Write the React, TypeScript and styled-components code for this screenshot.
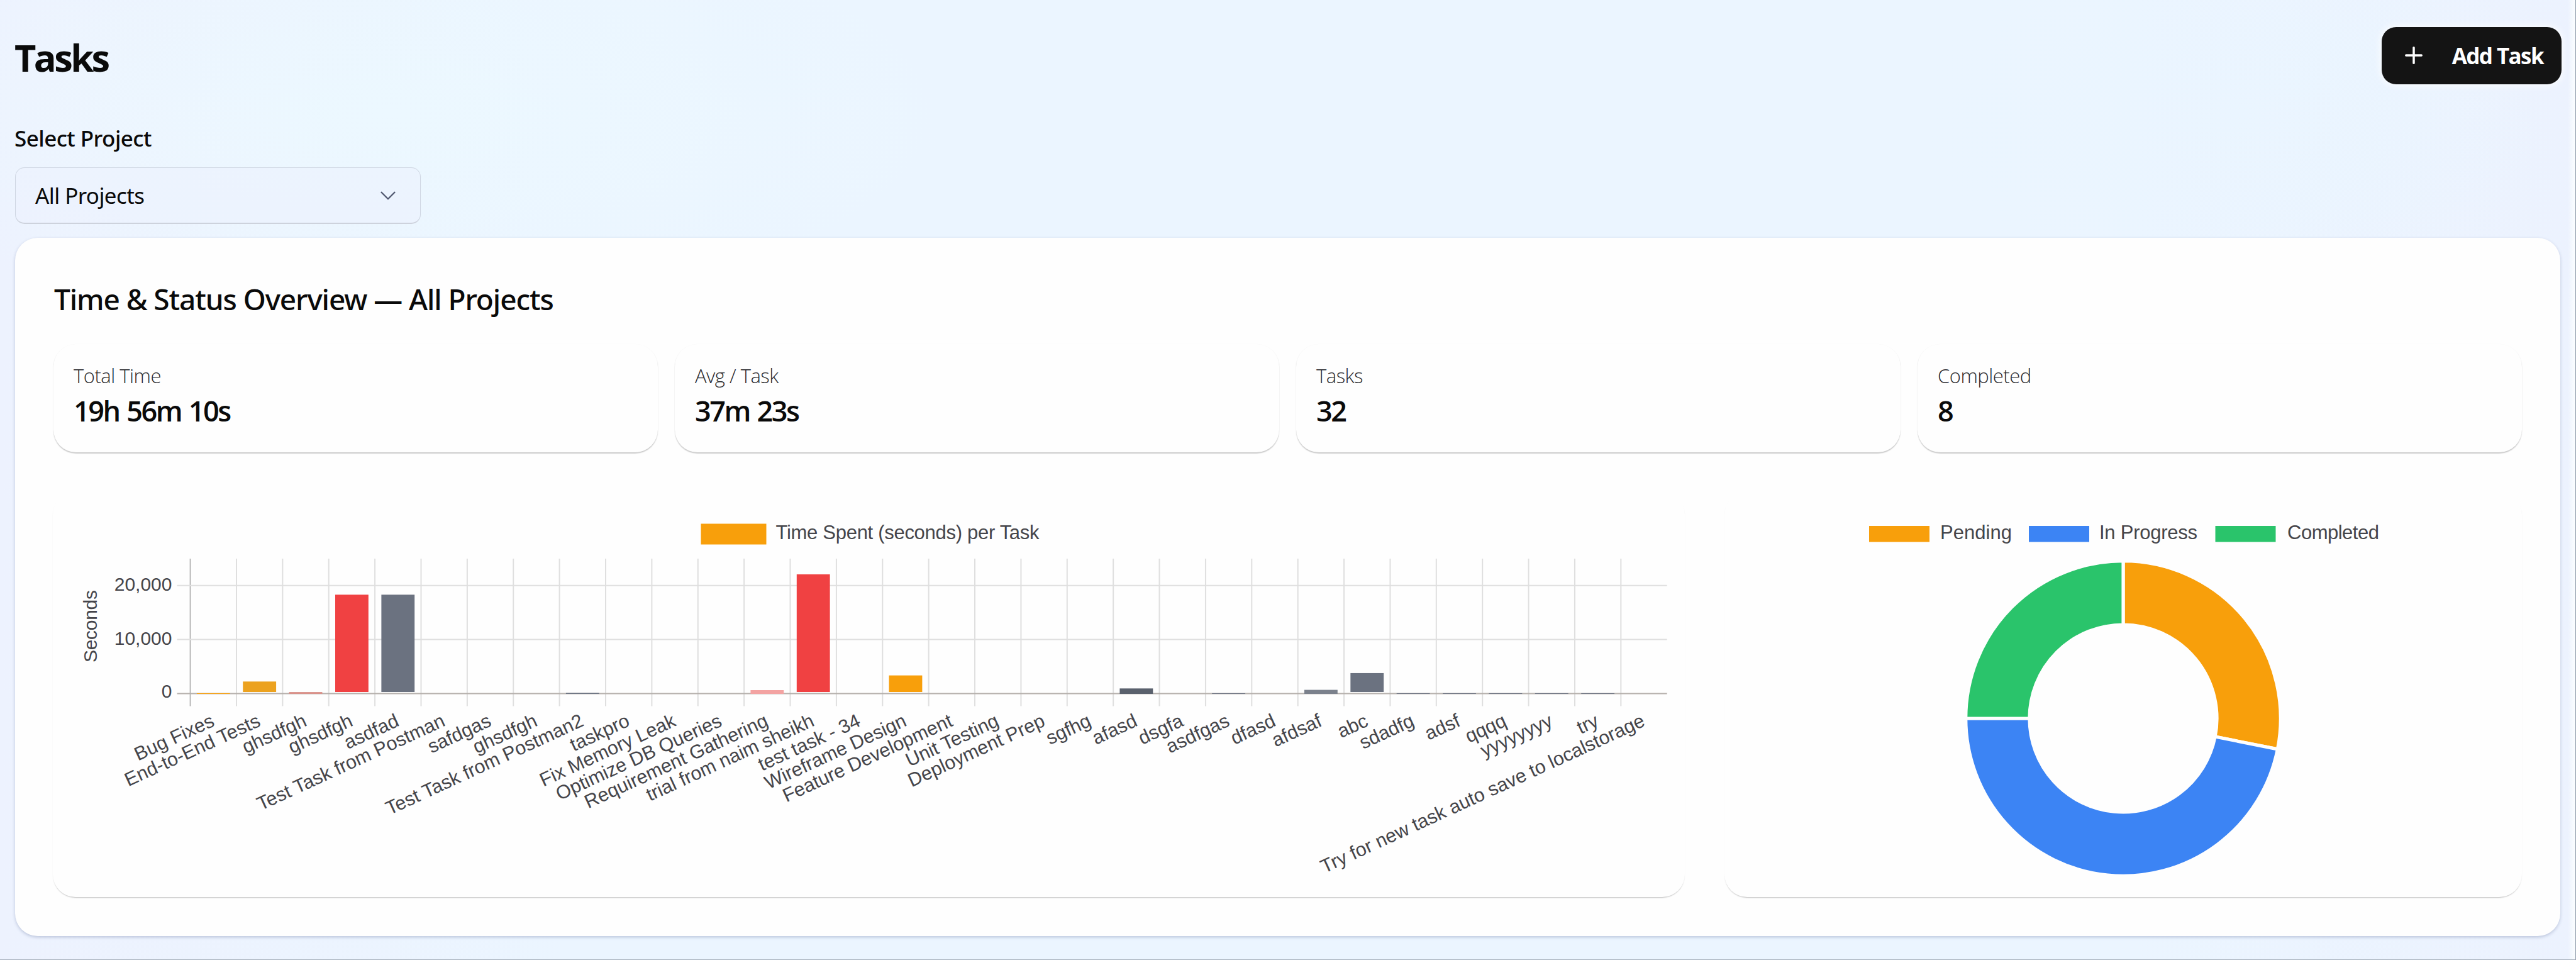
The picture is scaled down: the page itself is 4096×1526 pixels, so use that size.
import React from "react";
import { ChevronDown, Plus } from "lucide-react";
import styled, { createGlobalStyle } from "styled-components";

const GlobalStyle = createGlobalStyle`
  * {
    box-sizing: border-box;
  }

  body {
    margin: 0;
    font-family: "Noto Sans", "Open Sans", sans-serif;
    color: #0a0a0a;
  }
`;

const Page = styled.div`
  width: 4096px;
  height: 1526px;
  padding: 0 24px;
  overflow: hidden;
  border-right: 1px solid #8d99a8;
  border-bottom: 1px solid #a3adb8;
  background:
    linear-gradient(to left, #fbfeff 0, rgba(251, 254, 255, 0) 12px),
    radial-gradient(ellipse 900px 330px at 620px 180px, #ecf8ff 0%, rgba(236, 248, 255, 0) 100%),
    radial-gradient(ellipse 500px 300px at 3560px 180px, #eaf5ff 0%, rgba(234, 245, 255, 0) 100%),
    linear-gradient(to right, #edf2fe 0, #ebf5ff 900px, #ebf5ff 3400px, #ecf2fe 4096px);
`;

const Header = styled.header`
  height: 176px;
  display: flex;
  align-items: center;
  justify-content: space-between;
`;

const Heading = styled.h1`
  margin: 5px 0 0 -1px;
  font-family: "Open Sans", sans-serif;
  font-size: 59.5px;
  line-height: 80px;
  font-weight: 700;
  letter-spacing: -3.6px;
`;

const AddButton = styled.button`
  width: 286px;
  height: 91px;
  margin-right: -2px;
  padding: 0 29px 0 30px;
  display: flex;
  align-items: center;
  justify-content: space-between;
  border: none;
  border-radius: 23px;
  background: #141414;
  color: #fff;
  box-shadow: 0 0 12px 2px rgba(255, 255, 255, 0.85);
  font-family: "Open Sans", sans-serif;
  font-size: 35px;
  font-weight: 700;
  letter-spacing: -1.6px;
`;

const FieldLabel = styled.label`
  display: block;
  margin-top: 24px;
  margin-left: -1px;
  font-size: 35px;
  line-height: 40px;
  font-weight: 500;
  letter-spacing: -0.55px;
`;

const Select = styled.div`
  width: 645px;
  height: 90px;
  margin-top: 26px;
  padding: 0 30px 0 31px;
  display: flex;
  align-items: center;
  justify-content: space-between;
  border: 1px solid #cfd6e2;
  border-bottom: 2px solid #cdd2dc;
  border-radius: 15px;
  background: rgba(237, 242, 254, 0.6);
  font-size: 35px;
  letter-spacing: -0.6px;
`;

const Card = styled.section`
  width: 4047px;
  height: 1110px;
  margin-top: 22px;
  padding: 67px 61px 0;
  border-radius: 36px;
  background: #fefefe;
  box-shadow: 0 2px 5px rgba(60, 80, 130, 0.28);
`;

const CardTitle = styled.h2`
  margin: 0 0 0 1px;
  font-size: 46px;
  line-height: 60px;
  font-weight: 500;
  letter-spacing: -1.1px;
`;

const Stats = styled.div`
  margin-top: 42px;
  display: grid;
  grid-template-columns: repeat(4, 1fr);
  gap: 27px;
`;

const Stat = styled.div`
  height: 172px;
  padding: 30px 32px 0;
  border-radius: 36px;
  background: #fefefe;
  box-shadow: 0 1.5px 1.5px rgba(0, 0, 0, 0.2);
`;

const StatLabel = styled.div`
  font-family: "Open Sans", sans-serif;
  font-size: 31px;
  line-height: 40px;
  font-weight: 300;
  letter-spacing: -0.5px;
  color: #2c2c30;
`;

const StatValue = styled.div`
  margin-top: 6px;
  font-family: "Open Sans", sans-serif;
  font-size: 45px;
  line-height: 60px;
  font-weight: 600;
  letter-spacing: -2.5px;
  word-spacing: 2.5px;
`;

const Charts = styled.div`
  margin-top: 63px;
  margin-left: -1px;
  display: grid;
  grid-template-columns: 2595px 1fr;
  gap: 63px;
`;

const Panel = styled.div`
  height: 644px;
  border-radius: 36px;
  background: #fefefe;
  box-shadow: 0 2px 2px -1px rgba(0, 0, 0, 0.25);
  overflow: hidden;

  svg {
    display: block;
    font-family: "Liberation Sans", Arial, sans-serif;
    font-size: 31px;
    fill: #45454a;
  }
`;

const ORANGE = "#f89f0b";
const RED = "#f04142";
const GRAY = "#6b7280";
const BLUE = "#3c84f4";
const GREEN = "#2ac46b";

interface Task {
  name: string;
  seconds: number;
  color: string;
}

const tasks: Task[] = [
  { name: "Bug Fixes", seconds: 60, color: ORANGE },
  { name: "End-to-End Tests", seconds: 2230, color: "#eca21f" },
  { name: "ghsdfgh", seconds: 280, color: "#d9928a" },
  { name: "ghsdfgh", seconds: 18300, color: RED },
  { name: "asdfad", seconds: 18300, color: GRAY },
  { name: "Test Task from Postman", seconds: 0, color: GRAY },
  { name: "safdgas", seconds: 0, color: GRAY },
  { name: "ghsdfgh", seconds: 0, color: GRAY },
  { name: "Test Task from Postman2", seconds: 120, color: GRAY },
  { name: "taskpro", seconds: 0, color: GRAY },
  { name: "Fix Memory Leak", seconds: 0, color: GRAY },
  { name: "Optimize DB Queries", seconds: 0, color: GRAY },
  { name: "Requirement Gathering", seconds: 640, color: "#f3a3a2" },
  { name: "trial from naim sheikh", seconds: 22060, color: RED },
  { name: "test task - 34", seconds: 0, color: GRAY },
  { name: "Wireframe Design", seconds: 3360, color: ORANGE },
  { name: "Feature Development", seconds: 0, color: GRAY },
  { name: "Unit Testing", seconds: 0, color: GRAY },
  { name: "Deployment Prep", seconds: 0, color: GRAY },
  { name: "sgfhg", seconds: 0, color: GRAY },
  { name: "afasd", seconds: 950, color: "#5a616d" },
  { name: "dsgfa", seconds: 0, color: GRAY },
  { name: "asdfgas", seconds: 60, color: GRAY },
  { name: "dfasd", seconds: 0, color: GRAY },
  { name: "afdsaf", seconds: 690, color: "#7b818c" },
  { name: "abc", seconds: 3790, color: GRAY },
  { name: "sdadfg", seconds: 60, color: GRAY },
  { name: "adsf", seconds: 60, color: GRAY },
  { name: "qqqq", seconds: 60, color: GRAY },
  { name: "yyyyyyyy", seconds: 60, color: GRAY },
  { name: "try", seconds: 60, color: GRAY },
  { name: "Try for new task auto save to localstorage", seconds: 0, color: GRAY },
];

const AXIS_X = 218.6;
const AXIS_END = 2566.7;
const AXIS_TOP = 106;
const AXIS_Y = 320.5;
const STEP = (AXIS_END - AXIS_X) / tasks.length;
const PER_SECOND = 85.9 / 10000;

const yTicks = [
  { value: 20000, label: "20,000", baseline: 157 },
  { value: 10000, label: "10,000", baseline: 243 },
  { value: 0, label: "0", baseline: 327 },
];

const BarChart: React.FC = () => (
  <svg width="2595" height="644" viewBox="0 0 2595 644">
    <rect x="1030.5" y="50.5" width="104" height="33" fill={ORANGE} />
    <text x="1149.5" y="74.5" textLength="419">
      Time Spent (seconds) per Task
    </text>

    <g stroke="#dfdfdf" strokeWidth="2">
      {tasks.map((_, i) => (
        <line
          key={i}
          x1={AXIS_X + i * STEP}
          x2={AXIS_X + i * STEP}
          y1={AXIS_TOP}
          y2={AXIS_Y + 20}
          stroke={i === 0 ? "#b9b9b9" : undefined}
        />
      ))}
      {yTicks.map(({ value }) => (
        <line
          key={value}
          x1={AXIS_X - 21}
          x2={AXIS_END}
          y1={AXIS_Y - value * PER_SECOND}
          y2={AXIS_Y - value * PER_SECOND}
          stroke={value === 0 ? "#b5b0ac" : undefined}
        />
      ))}
    </g>

    {tasks.map(({ seconds, color }, i) => {
      const x = AXIS_X + (i + 0.14) * STEP;
      const top = AXIS_Y - seconds * PER_SECOND;
      // tiny values sit right on the axis line
      const bottom = seconds > 1000 ? AXIS_Y - 2.5 : AXIS_Y + 0.5;

      return seconds > 0 ? (
        <rect key={i} x={x} y={top} width={STEP * 0.72} height={bottom - top} fill={color} />
      ) : null;
    })}

    {yTicks.map(({ label, baseline }) => (
      <text key={label} x="189.5" y={baseline} textAnchor="end" fontSize="30">
        {label}
      </text>
    ))}
    <text transform="translate(69.5 271) rotate(-90)" textLength="115" fontSize="30">
      Seconds
    </text>

    {tasks.map(({ name }, i) => (
      <text
        key={i}
        textAnchor="end"
        fontSize="30.5"
        transform={`translate(${AXIS_X + (i + 0.5) * STEP + 3.5} 371) rotate(-24.7)`}
      >
        {name}
      </text>
    ))}
  </svg>
);

const statuses = [
  { label: "Pending", count: 9, color: ORANGE, x: 230, textX: 343, width: 114 },
  { label: "In Progress", count: 15, color: BLUE, x: 484, textX: 596, width: 156 },
  { label: "Completed", count: 8, color: GREEN, x: 780.5, textX: 895, width: 146 },
];

const CX = 634;
const CY = 360;
const OUTER = 250.3;
const INNER = 149;

const point = (radius: number, turn: number) => {
  const angle = turn * Math.PI * 2;
  return `${CX + radius * Math.sin(angle)} ${CY - radius * Math.cos(angle)}`;
};

const slicePath = (from: number, to: number) =>
  `M${point(OUTER, from)}A${OUTER} ${OUTER} 0 0 1 ${point(OUTER, to)}` +
  `L${point(INNER, to)}A${INNER} ${INNER} 0 0 0 ${point(INNER, from)}Z`;

const StatusChart: React.FC = () => {
  const total = statuses.reduce((sum, s) => sum + s.count, 0);
  let start = 0;

  return (
    <svg width="1266" height="644" viewBox="0 0 1266 644">
      {statuses.map(({ label, color, x, textX, width }) => (
        <g key={label}>
          <rect x={x} y="54" width="96" height="25.5" fill={color} />
          <text x={textX} y="74.5" textLength={width}>
            {label}
          </text>
        </g>
      ))}
      {statuses.map(({ label, count, color }) => {
        const from = start;
        start += count / total;
        return (
          <path
            key={label}
            d={slicePath(from, start)}
            fill={color}
            stroke="#fefefe"
            strokeWidth="5.2"
          />
        );
      })}
    </svg>
  );
};

const stats = [
  { label: "Total Time", value: "19h 56m 10s" },
  { label: "Avg / Task", value: "37m 23s" },
  { label: "Tasks", value: "32" },
  { label: "Completed", value: "8" },
];

const App: React.FC = () => (
  <Page>
    <GlobalStyle />
    <Header>
      <Heading>Tasks</Heading>
      <AddButton>
        <Plus size={42} />
        <span>Add Task</span>
      </AddButton>
    </Header>

    <FieldLabel>Select Project</FieldLabel>
    <Select>
      <span>All Projects</span>
      <ChevronDown size={42} strokeWidth={1.3} color="#4f566e" />
    </Select>

    <Card>
      <CardTitle>Time &amp; Status Overview — All Projects</CardTitle>
      <Stats>
        {stats.map(({ label, value }) => (
          <Stat key={label}>
            <StatLabel>{label}</StatLabel>
            <StatValue>{value}</StatValue>
          </Stat>
        ))}
      </Stats>
      <Charts>
        <Panel>
          <BarChart />
        </Panel>
        <Panel>
          <StatusChart />
        </Panel>
      </Charts>
    </Card>
  </Page>
);

export default App;
